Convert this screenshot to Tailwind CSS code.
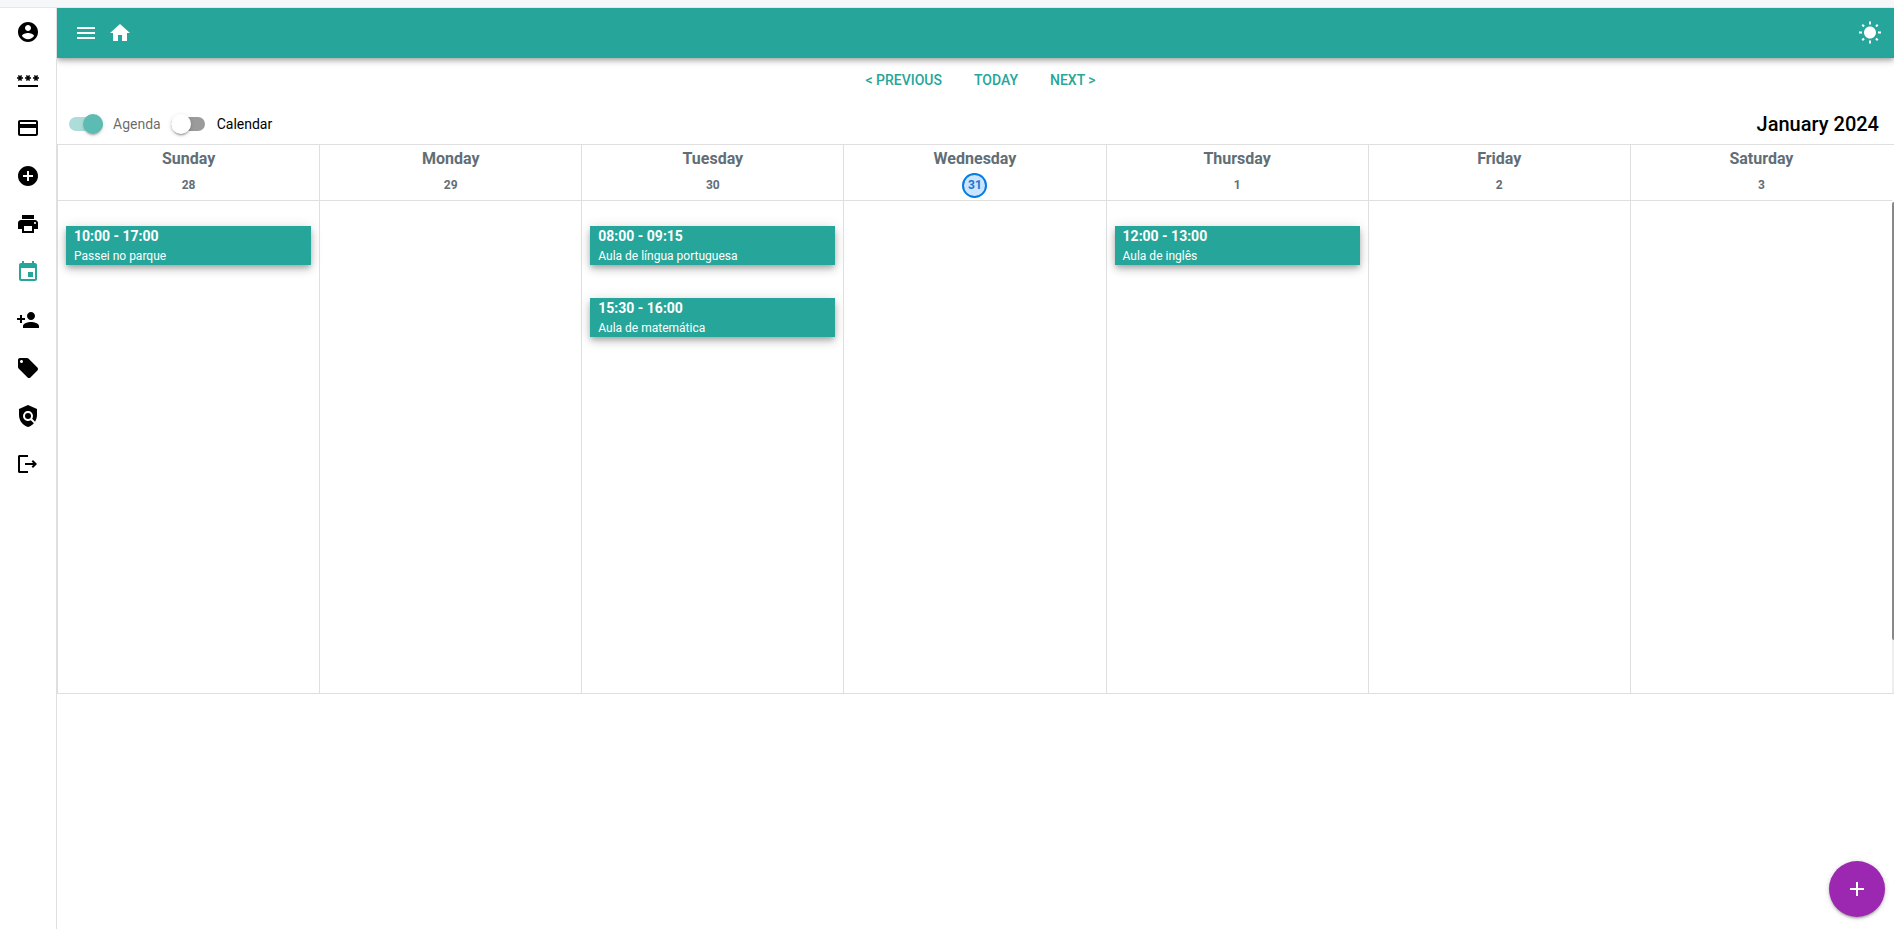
<!DOCTYPE html>
<html lang="en">
<head>
<meta charset="utf-8">
<meta name="viewport" content="width=device-width, initial-scale=1">
<title>Agenda</title>
<script src="https://cdn.jsdelivr.net/npm/@tailwindcss/browser@4"></script>
</head>
<body class="flex min-h-screen flex-col bg-white font-[Roboto,sans-serif] text-sm text-black">
<div class="relative z-20 h-2 border-b border-[#e6e7e8] bg-[#f5f7f9]"></div>
<div class="flex grow">
  <nav aria-label="Main" class="relative z-10 flex w-[57px] shrink-0 flex-col border-r border-[#dfdfdf] bg-white">
    <a href="#" aria-label="Account" class="flex h-12 items-center justify-center"><svg class="size-6" viewBox="0 0 24 24" fill="currentColor"><path d="M12 2C6.48 2 2 6.48 2 12s4.48 10 10 10 10-4.48 10-10S17.52 2 12 2zm0 3c1.66 0 3 1.34 3 3s-1.34 3-3 3-3-1.34-3-3 1.34-3 3-3zm0 14.200c-2.500 0-4.710-1.280-6-3.220.03-1.990 4-3.080 6-3.080 1.990 0 5.970 1.090 6 3.080-1.290 1.940-3.500 3.220-6 3.220z"/></svg></a>
    <a href="#" aria-label="Password" class="flex h-12 items-center justify-center"><svg class="size-6" viewBox="0 0 24 24" fill="currentColor"><path d="M2 17h20v2H2v-2zm1.150-4.050L4 11.470l.85 1.480 1.300-.75-.85-1.480H7v-1.500H5.300l.85-1.470L4.850 7 4 8.470 3.150 7l-1.300.75.85 1.470H1v1.500h1.700l-.85 1.480 1.300.75zm6.700-.75l1.300.75.85-1.480.85 1.480 1.300-.75-.85-1.480H15v-1.500h-1.700l.85-1.470-1.300-.75L12 8.470 11.150 7l-1.300.75.85 1.470H9v1.500h1.700l-.85 1.480zM23 9.220h-1.700l.85-1.470-1.300-.75L20 8.470 19.150 7l-1.300.75.85 1.470H17v1.500h1.700l-.85 1.480 1.300.75.85-1.480.85 1.480 1.300-.75-.85-1.480H23v-1.500z"/></svg></a>
    <a href="#" aria-label="Cards" class="flex h-12 items-center justify-center"><svg class="size-6" viewBox="0 0 24 24" fill="currentColor"><path d="M20 4H4c-1.110 0-1.990.89-1.990 2L2 18c0 1.110.89 2 2 2h16c1.110 0 2-.89 2-2V6c0-1.110-.89-2-2-2zm0 14H4v-6h16v6zm0-10H4V6h16v2z"/></svg></a>
    <a href="#" aria-label="Add" class="flex h-12 items-center justify-center"><svg class="size-6" viewBox="0 0 24 24" fill="currentColor"><path d="M12 2C6.480 2 2 6.480 2 12s4.480 10 10 10 10-4.480 10-10S17.520 2 12 2zm5 11h-4v4h-2v-4H7v-2h4V7h2v4h4v2z"/></svg></a>
    <a href="#" aria-label="Print" class="flex h-12 items-center justify-center"><svg class="size-6" viewBox="0 0 24 24" fill="currentColor"><path d="M19 8H5c-1.660 0-3 1.340-3 3v6h4v4h12v-4h4v-6c0-1.660-1.340-3-3-3zm-3 11H8v-5h8v5zm3-7c-.55 0-1-.45-1-1s.45-1 1-1 1 .45 1 1-.45 1-1 1zm-1-9H6v4h12V3z"/></svg></a>
    <a href="#" aria-label="Agenda" aria-current="page" class="flex h-12 items-center justify-center text-[#26a69a]"><svg class="size-6" viewBox="0 0 24 24" fill="currentColor"><path d="M17 12h-5v5h5v-5zM16 1v2H8V1H6v2H5c-1.110 0-1.990.9-1.990 2L3 19c0 1.100.89 2 2 2h14c1.100 0 2-.9 2-2V5c0-1.100-.9-2-2-2h-1V1h-2zm3 18H5V8h14v11z"/></svg></a>
    <a href="#" aria-label="Add person" class="flex h-12 items-center justify-center"><svg class="size-6" viewBox="0 0 24 24" fill="currentColor"><path d="M15 12c2.210 0 4-1.790 4-4s-1.790-4-4-4-4 1.790-4 4 1.790 4 4 4zm-9-2V7H4v3H1v2h3v3h2v-3h3v-2H6zm9 4c-2.670 0-8 1.340-8 4v2h16v-2c0-2.660-5.330-4-8-4z"/></svg></a>
    <a href="#" aria-label="Tags" class="flex h-12 items-center justify-center"><svg class="size-6" viewBox="0 0 24 24" fill="currentColor"><path d="M21.410 11.580l-9-9C12.050 2.220 11.550 2 11 2H4c-1.100 0-2 .9-2 2v7c0 .55.22 1.050.59 1.420l9 9c.36.36.86.58 1.410.58.55 0 1.050-.22 1.410-.59l7-7c.37-.36.59-.86.59-1.410 0-.55-.23-1.060-.59-1.420zM5.500 7C4.670 7 4 6.330 4 5.500S4.670 4 5.500 4 7 4.670 7 5.500 6.330 7 5.500 7z"/></svg></a>
    <a href="#" aria-label="Policy" class="flex h-12 items-center justify-center"><svg class="size-6" viewBox="0 0 24 24" fill="currentColor"><path d="M21 5l-9-4-9 4v6c0 5.550 3.840 10.740 9 12 2.300-.56 4.330-1.900 5.880-3.710l-3.120-3.120c-1.940 1.290-4.580 1.070-6.290-.64-1.950-1.950-1.950-5.120 0-7.070 1.950-1.950 5.120-1.950 7.070 0 1.710 1.710 1.920 4.350.64 6.290l2.900 2.900C20.290 15.690 21 13.380 21 11V5z"/><circle cx="12" cy="12" r="3"/></svg></a>
    <a href="#" aria-label="Log out" class="flex h-12 items-center justify-center"><svg class="size-6" viewBox="0 0 24 24" fill="currentColor"><path d="M17 8l-1.410 1.410L17.170 11H9v2h8.170l-1.580 1.580L17 16l4-4-4-4zM5 5h7V3H3.500C2.670 3 2 3.670 2 4.500v15c0 .83.67 1.500 1.500 1.500H12v-2H4V5h1z"/></svg></a>
  </nav>
  <div class="flex min-w-0 grow flex-col">
    <header class="flex h-[50px] items-center gap-[10px] bg-[#26a69a] pr-3 pl-[17px] text-white shadow-[0_2px_4px_-1px_rgba(0,0,0,0.2),0_4px_5px_rgba(0,0,0,0.14),0_1px_10px_rgba(0,0,0,0.12)]">
      <button type="button" aria-label="Menu"><svg class="size-6" viewBox="0 0 24 24" fill="currentColor"><path d="M3 18h18v-2H3v2zm0-5h18v-2H3v2zm0-7v2h18V6H3z"/></svg></button>
      <a href="#" aria-label="Home"><svg class="size-6" viewBox="0 0 24 24" fill="currentColor"><path d="M10 20v-6h4v6h5v-8h3L12 3 2 12h3v8z"/></svg></a>
      <button type="button" aria-label="Light mode" class="ml-auto"><svg class="size-6" viewBox="0 0 24 24" fill="currentColor"><path d="M6.760 4.840l-1.800-1.790-1.410 1.410 1.790 1.790 1.420-1.410zM4 10.500H1v2h3v-2zm9-9.950h-2V3.500h2V.55zm7.450 3.910l-1.410-1.410-1.790 1.790 1.410 1.410 1.790-1.790zm-3.210 13.700l1.790 1.800 1.410-1.410-1.800-1.790-1.400 1.400zM20 10.500v2h3v-2h-3zm-8-5c-3.310 0-6 2.690-6 6s2.690 6 6 6 6-2.690 6-6-2.690-6-6-6zm-1 16.950h2V19.500h-2v2.950zm-7.450-3.910l1.410 1.410 1.790-1.800-1.410-1.410-1.790 1.800z"/></svg></button>
    </header>
    <main class="flex flex-col">
      <div class="mt-1 flex justify-center pl-[10px] font-medium text-[#26a69a]">
        <button type="button" class="h-9 px-4">&lt; PREVIOUS</button>
        <button type="button" class="h-9 px-4">TODAY</button>
        <button type="button" class="h-9 px-4">NEXT &gt;</button>
      </div>
      <div class="mt-[6px] flex h-10 items-center pr-[15px] pl-3">
        <label class="flex items-center gap-[10px] opacity-75">
          <span class="relative flex h-5 w-[34px] items-center">
            <input type="checkbox" checked disabled class="peer h-[14px] w-[34px] appearance-none rounded-full bg-[#26a69a]/50">
            <span class="absolute left-0 size-5 rounded-full bg-white shadow-[0_3px_1px_-2px_rgba(0,0,0,0.2),0_2px_2px_rgba(0,0,0,0.14),0_1px_5px_rgba(0,0,0,0.12)] peer-checked:left-[14px] peer-checked:bg-[#26a69a]"></span>
          </span>
          <span class="text-black/80">Agenda</span>
        </label>
        <label class="ml-[10px] flex items-center gap-3">
          <span class="relative flex h-5 w-[34px] items-center">
            <input type="checkbox" class="peer h-[14px] w-[34px] appearance-none rounded-full bg-[#9b9b9b]">
            <span class="absolute left-0 size-5 rounded-full bg-white shadow-[0_3px_1px_-2px_rgba(0,0,0,0.2),0_2px_2px_rgba(0,0,0,0.14),0_1px_5px_rgba(0,0,0,0.12)]"></span>
          </span>
          Calendar
        </label>
        <h1 class="ml-auto text-xl font-medium">January 2024</h1>
      </div>
      <div class="relative border-y border-[#dfdfdf] pr-[2px]">
        <table class="w-full table-fixed border-separate border-spacing-0">
          <thead>
            <tr class="text-[#616e76] *:h-14 *:border-b *:border-l *:border-[#dfdfdf] *:p-0 *:align-top">
              <th scope="col"><div class="pt-[2px] text-base leading-6">Sunday</div><div class="mt-[2px] text-xs leading-6">28</div></th>
              <th scope="col"><div class="pt-[2px] text-base leading-6">Monday</div><div class="mt-[2px] text-xs leading-6">29</div></th>
              <th scope="col"><div class="pt-[2px] text-base leading-6">Tuesday</div><div class="mt-[2px] text-xs leading-6">30</div></th>
              <th scope="col"><div class="pt-[2px] text-base leading-6">Wednesday</div><div class="mx-auto mt-[2px] size-[25px] rounded-full border-2 border-[#027be3] bg-[#cce5ff] text-xs leading-5 text-[#1976d2]">31</div></th>
              <th scope="col"><div class="pt-[2px] text-base leading-6">Thursday</div><div class="mt-[2px] text-xs leading-6">1</div></th>
              <th scope="col"><div class="pt-[2px] text-base leading-6">Friday</div><div class="mt-[2px] text-xs leading-6">2</div></th>
              <th scope="col"><div class="pt-[2px] text-base leading-6">Saturday</div><div class="mt-[2px] text-xs leading-6">3</div></th>
            </tr>
          </thead>
          <tbody>
            <tr class="*:h-[492px] *:border-l *:border-[#dfdfdf] *:px-2 *:pt-[25px] *:align-top">
              <td>
                <div class="bg-[#26a69a] px-2 text-xs leading-[18px] text-white shadow-[0_3px_5px_-1px_rgba(0,0,0,0.2),0_5px_8px_rgba(0,0,0,0.14),0_1px_14px_rgba(0,0,0,0.12)]"><div class="text-sm leading-[21px] font-bold">10:00 - 17:00</div><div>Passei no parque</div></div>
              </td>
              <td></td>
              <td>
                <div class="bg-[#26a69a] px-2 text-xs leading-[18px] text-white shadow-[0_3px_5px_-1px_rgba(0,0,0,0.2),0_5px_8px_rgba(0,0,0,0.14),0_1px_14px_rgba(0,0,0,0.12)]"><div class="text-sm leading-[21px] font-bold">08:00 - 09:15</div><div>Aula de língua portuguesa</div></div>
                <div class="mt-[33px] bg-[#26a69a] px-2 text-xs leading-[18px] text-white shadow-[0_3px_5px_-1px_rgba(0,0,0,0.2),0_5px_8px_rgba(0,0,0,0.14),0_1px_14px_rgba(0,0,0,0.12)]"><div class="text-sm leading-[21px] font-bold">15:30 - 16:00</div><div>Aula de matemática</div></div>
              </td>
              <td></td>
              <td>
                <div class="bg-[#26a69a] px-2 text-xs leading-[18px] text-white shadow-[0_3px_5px_-1px_rgba(0,0,0,0.2),0_5px_8px_rgba(0,0,0,0.14),0_1px_14px_rgba(0,0,0,0.12)]"><div class="text-sm leading-[21px] font-bold">12:00 - 13:00</div><div>Aula de inglês</div></div>
              </td>
              <td></td>
              <td></td>
            </tr>
          </tbody>
        </table>
        <div class="absolute top-[57px] right-0 bottom-0 w-[2px] bg-[#eeeeee]"><div class="h-[438px] rounded-l-full bg-[#888888]"></div></div>
      </div>
    </main>
  </div>
</div>
<button type="button" aria-label="New event" class="fixed right-[9px] bottom-3 flex size-14 items-center justify-center rounded-full bg-[#9c27b0] text-white shadow-[0_1px_5px_rgba(0,0,0,0.2),0_2px_2px_rgba(0,0,0,0.14),0_3px_1px_-2px_rgba(0,0,0,0.12)]"><svg class="size-6" viewBox="0 0 24 24" fill="currentColor"><path d="M19 13h-6v6h-2v-6H5v-2h6V5h2v6h6v2z"/></svg></button>
</body>
</html>
